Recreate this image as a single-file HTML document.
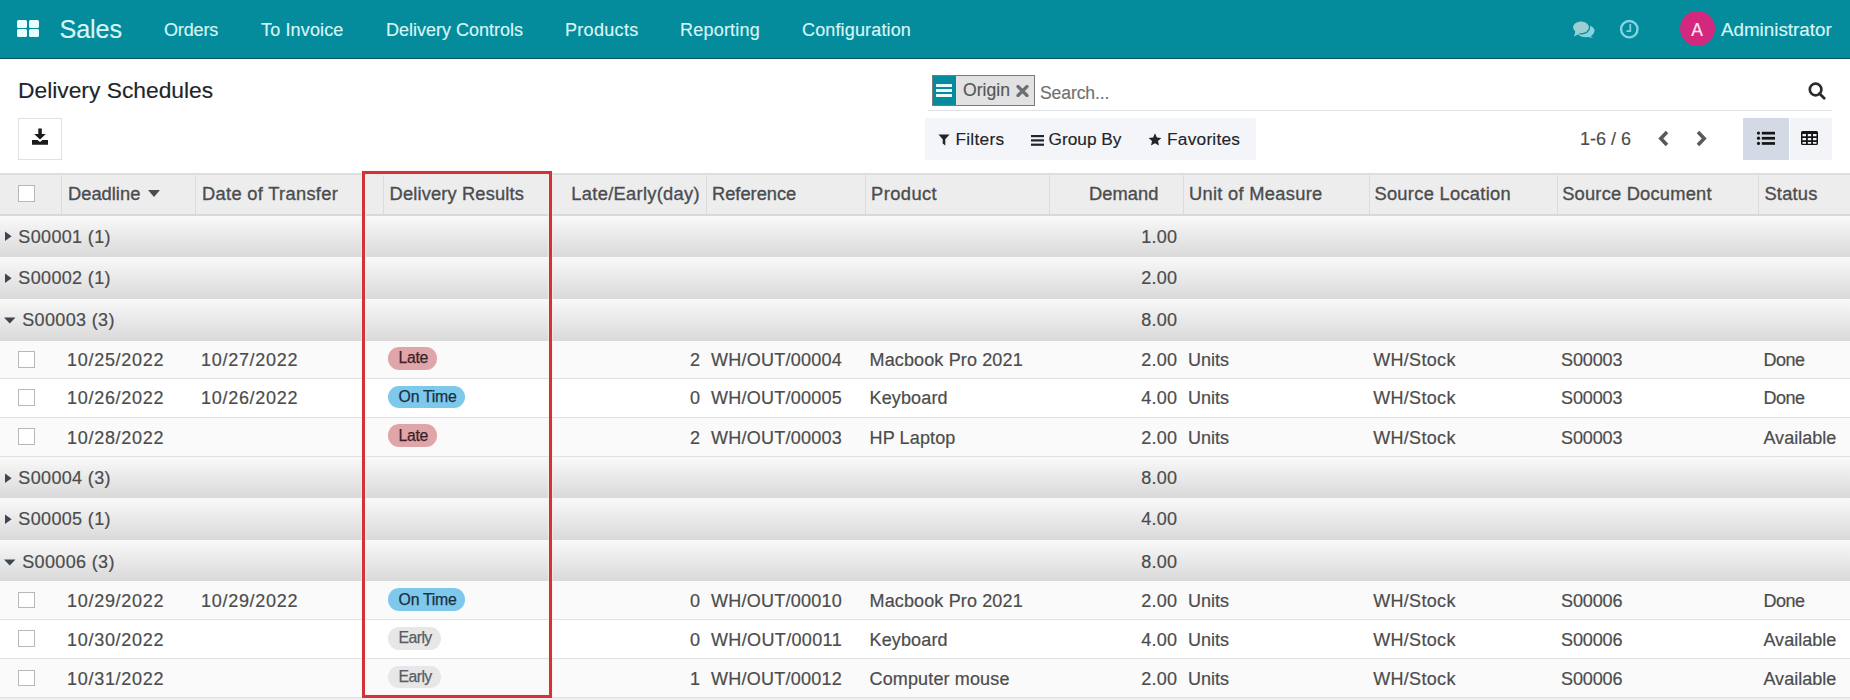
<!DOCTYPE html>
<html><head><meta charset="utf-8">
<style>
*{box-sizing:border-box;margin:0;padding:0}
html,body{width:1850px;height:700px;overflow:hidden;background:#fff}
body{font-family:"Liberation Sans",sans-serif;color:#4c4c4c;position:relative;-webkit-text-stroke:0.15px currentColor}
.a{position:absolute;white-space:nowrap}
#nav{position:absolute;left:0;top:0;width:1850px;height:59px;background:#048c9d;border-bottom:1px solid #0a5560}
.nv{position:absolute;top:18.5px;font-size:18px;line-height:22px;color:#d9f6f6}
.sq{position:absolute;width:10px;height:8px;background:#eaffff;border-radius:1.5px}
.hd{position:absolute;top:0;height:42px;line-height:42px;font-size:18px;font-weight:bold;color:#4c4c4c}
.sep{position:absolute;top:4px;width:1px;height:34px;background:#dcdcdc}
.row{position:absolute;left:0;width:1850px}
.grp{background:linear-gradient(to bottom,#f9f9f9,#d9d9d9)}
.dat{border-bottom:1px solid #dee2e6}
.odd{background:#fafafa}
.even{background:#fff}
.t{position:absolute;font-size:18px;line-height:22px;color:#4c4c4c;white-space:nowrap;-webkit-text-stroke:0.2px #4c4c4c}
.r{text-align:right}
.cb{position:absolute;left:18px;width:17px;height:17px;border:1px solid #b8b8b8;background:#fff}
.bt{position:absolute;white-space:nowrap;-webkit-text-stroke:0.25px currentColor}
.badge{position:absolute;left:388px;height:22px;border-radius:11px;font-size:15.4px;line-height:22px;padding:0 10px;color:#3a3a3a}
.late{background:#e0a5a8;color:#402a2c}
.ontime{background:#7ec8ec;color:#1e3a4c}
.early{background:#e7e7e7;color:#555}
</style></head><body>
<!-- NAVBAR -->
<div id="nav">
  <div class="sq" style="left:17.2px;top:19.6px"></div>
  <div class="sq" style="left:29px;top:19.6px"></div>
  <div class="sq" style="left:17.2px;top:29px"></div>
  <div class="sq" style="left:29px;top:29px"></div>
  <div class="nv" style="left:59.5px;top:14.6px;font-size:25.2px;line-height:28px;letter-spacing:-0.1px">Sales</div>
  <div class="nv" style="left:164px;letter-spacing:-0.135px">Orders</div>
  <div class="nv" style="left:261px;letter-spacing:0.145px">To Invoice</div>
  <div class="nv" style="left:386px;letter-spacing:-0.003px">Delivery Controls</div>
  <div class="nv" style="left:565px;letter-spacing:0.308px">Products</div>
  <div class="nv" style="left:680px;letter-spacing:0.217px">Reporting</div>
  <div class="nv" style="left:802px;letter-spacing:0.148px">Configuration</div>
  <!-- chat icon -->
  <svg class="a" style="left:1565px;top:12px" width="80" height="34" viewBox="0 0 80 34">
    <ellipse cx="20.5" cy="19" rx="9" ry="6.2" fill="#86d5de"/>
    <path d="M24 23 L28 26 L20 24.5 Z" fill="#86d5de"/>
    <ellipse cx="16" cy="15.3" rx="8.6" ry="6.5" fill="#9ccfd2" stroke="#048c9d" stroke-width="1.3"/>
    <path d="M10.5 19 L9 24.5 L15.5 21 Z" fill="#9ccfd2"/>
    <circle cx="64.3" cy="17.2" r="8.2" fill="none" stroke="#82d6e2" stroke-width="2.4"/>
    <path d="M65.3 12 V19.2 H61.5" fill="none" stroke="#82d6e2" stroke-width="1.7"/>
  </svg>
  <div class="a" style="left:1680px;top:11px;width:34.5px;height:34.5px;border-radius:50%;background:#d2297f"></div>
  <div class="nv" style="left:1680px;width:34px;text-align:center;color:#fde6f1;font-size:17.5px;top:19px">A</div>
  <div class="nv" style="left:1721px;font-size:18.8px">Administrator</div>
</div>

<!-- CONTROL PANEL -->
<div class="a" style="left:18px;top:76px;font-size:22.8px;line-height:28px;color:#212529">Delivery Schedules</div>
<div class="a" style="left:18px;top:118px;width:44px;height:42px;border:1px solid #dee2e6;background:#fff"></div>
<svg class="a" style="left:31px;top:128px" width="18" height="18" viewBox="0 0 18 18">
  <path d="M7.3 0.5 H10.8 V6 H14.8 L9 11.5 L3.2 6 H7.3 Z" fill="#1b1b1b"/>
  <path d="M1 12 H6.5 L9 14 L11.5 12 H17 V16.8 H1 Z" fill="#1b1b1b"/>
</svg>

<!-- search -->
<div class="a" style="left:928px;top:110px;width:904px;height:1px;background:#dee2e6"></div>
<div class="a" style="left:931.5px;top:75px;width:103.5px;height:31px;border:1px solid #7a7a7a;background:#e2e2e2"></div>
<div class="a" style="left:932.5px;top:76px;width:23.5px;height:29px;background:#048c9d"></div>
<div class="a" style="left:936px;top:84px;width:16px;height:2.5px;background:#eafcfc"></div>
<div class="a" style="left:936px;top:89px;width:16px;height:2.5px;background:#eafcfc"></div>
<div class="a" style="left:936px;top:94px;width:16px;height:2.5px;background:#eafcfc"></div>
<div class="a" style="left:963px;top:79px;font-size:17.6px;line-height:22px;color:#555">Origin</div>
<svg class="a" style="left:1016px;top:85px" width="13" height="12" viewBox="0 0 13 12">
  <path d="M2 1.5 L11 10.5 M11 1.5 L2 10.5" stroke="#6b6f73" stroke-width="3.2" stroke-linecap="round"/>
</svg>
<div class="a" style="left:1040px;top:81.6px;font-size:17.6px;line-height:22px;color:#707070;letter-spacing:-0.12px">Search...</div>
<svg class="a" style="left:1808px;top:81.5px" width="18" height="18" viewBox="0 0 18 18">
  <circle cx="7.6" cy="7.5" r="5.8" fill="none" stroke="#2b2b2b" stroke-width="2.7"/>
  <path d="M11.5 11.5 L16.2 16.2" stroke="#2b2b2b" stroke-width="2.8" stroke-linecap="round"/>
</svg>

<!-- filter bar -->
<div class="a" style="left:924.5px;top:117.5px;width:331px;height:42.5px;background:#f4f5f8"></div>
<svg class="a" style="left:938px;top:134px" width="12" height="12" viewBox="0 0 12 12">
  <path d="M0.5 0.5 H11.5 L7.3 5.3 V11.5 L4.7 9.5 V5.3 Z" fill="#212529"/>
</svg>
<div class="a" style="left:955.4px;top:128px;font-size:17.3px;line-height:22px;color:#212529;letter-spacing:0.27px">Filters</div>
<svg class="a" style="left:1031px;top:135px" width="13" height="11" viewBox="0 0 13 11">
  <rect x="0" y="0" width="13" height="2.2" fill="#212529"/>
  <rect x="0" y="4.3" width="13" height="2.2" fill="#212529"/>
  <rect x="0" y="8.6" width="13" height="2.2" fill="#212529"/>
</svg>
<div class="a" style="left:1048.5px;top:128px;font-size:17.3px;line-height:22px;color:#212529">Group By</div>
<svg class="a" style="left:1148px;top:132.5px" width="14" height="13" viewBox="0 0 14 13">
  <path d="M7 0.3 L8.9 4.4 L13.4 4.9 L10 8 L11 12.6 L7 10.3 L3 12.6 L4 8 L0.6 4.9 L5.1 4.4 Z" fill="#212529"/>
</svg>
<div class="a" style="left:1167px;top:128px;font-size:17.3px;line-height:22px;color:#212529;letter-spacing:0.24px">Favorites</div>

<!-- pager -->
<div class="a" style="left:1580px;top:128px;font-size:18px;line-height:22px;color:#4c4c4c">1-6 / 6</div>
<svg class="a" style="left:1657px;top:129.5px" width="13" height="17" viewBox="0 0 13 17">
  <path d="M10 2 L3.8 8.5 L10 15" fill="none" stroke="#5a5a5a" stroke-width="3.6"/>
</svg>
<svg class="a" style="left:1695px;top:129.5px" width="13" height="17" viewBox="0 0 13 17">
  <path d="M3 2 L9.2 8.5 L3 15" fill="none" stroke="#5a5a5a" stroke-width="3.6"/>
</svg>
<div class="a" style="left:1743px;top:118px;width:46px;height:42px;background:#d4dae5"></div>
<div class="a" style="left:1790px;top:118px;width:42px;height:42px;background:#f3f4f7"></div>
<svg class="a" style="left:1756px;top:131px" width="20" height="15" viewBox="0 0 20 15">
  <circle cx="2.5" cy="2.1" r="1.6" fill="#151515"/><rect x="5.8" y="0.8" width="13.2" height="2.7" fill="#151515"/>
  <circle cx="2.5" cy="7.2" r="1.6" fill="#151515"/><rect x="5.8" y="5.9" width="13.2" height="2.7" fill="#151515"/>
  <circle cx="2.5" cy="12.4" r="1.6" fill="#151515"/><rect x="5.8" y="11.1" width="13.2" height="2.7" fill="#151515"/>
</svg>
<svg class="a" style="left:1801px;top:131px" width="17" height="14" viewBox="0 0 17 14">
  <path d="M1.5 0 H15.5 Q17 0 17 1.5 V12.5 Q17 14 15.5 14 H1.5 Q0 14 0 12.5 V1.5 Q0 0 1.5 0 Z M1.5 3 V5.2 H5 V3 Z M6.8 3 V5.2 H10.2 V3 Z M12 3 V5.2 H15.5 V3 Z M1.5 7 V9.2 H5 V7 Z M6.8 7 V9.2 H10.2 V7 Z M12 7 V9.2 H15.5 V7 Z M1.5 11 V12.7 H5 V11 Z M6.8 11 V12.7 H10.2 V11 Z M12 11 V12.7 H15.5 V11 Z" fill="#151515" fill-rule="evenodd"/>
</svg>

<!-- TABLE -->
<div class="a" style="left:0;top:173px;width:1850px;height:42.5px;background:#ededed;border-top:2px solid #dddee0;border-bottom:2px solid #d8d9db"></div>
<div class="a" style="left:61.0px;top:175px;width:1px;height:39px;background:#dcdcdc"></div>
<div class="a" style="left:195.0px;top:175px;width:1px;height:39px;background:#dcdcdc"></div>
<div class="a" style="left:383.0px;top:175px;width:1px;height:39px;background:#dcdcdc"></div>
<div class="a" style="left:550.0px;top:175px;width:1px;height:39px;background:#dcdcdc"></div>
<div class="a" style="left:706.0px;top:175px;width:1px;height:39px;background:#dcdcdc"></div>
<div class="a" style="left:864.5px;top:175px;width:1px;height:39px;background:#dcdcdc"></div>
<div class="a" style="left:1048.5px;top:175px;width:1px;height:39px;background:#dcdcdc"></div>
<div class="a" style="left:1182.5px;top:175px;width:1px;height:39px;background:#dcdcdc"></div>
<div class="a" style="left:1368.5px;top:175px;width:1px;height:39px;background:#dcdcdc"></div>
<div class="a" style="left:1556.5px;top:175px;width:1px;height:39px;background:#dcdcdc"></div>
<div class="a" style="left:1757.5px;top:175px;width:1px;height:39px;background:#dcdcdc"></div>
<div class="cb" style="top:185px;height:17px"></div>
<div class="t" style="top:182.56px;font-size:18.30px;line-height:22px;letter-spacing:0.020px;left:68.00px;-webkit-text-stroke:0.35px #4a4f55">Deadline</div>
<div class="t" style="top:182.56px;font-size:18.30px;line-height:22px;letter-spacing:0.318px;left:202.00px;-webkit-text-stroke:0.35px #4a4f55">Date of Transfer</div>
<div class="t" style="top:182.56px;font-size:18.30px;line-height:22px;letter-spacing:0.143px;left:389.60px;-webkit-text-stroke:0.35px #4a4f55">Delivery Results</div>
<div class="t" style="top:182.56px;font-size:18.30px;line-height:22px;letter-spacing:0.307px;right:1150.09px;-webkit-text-stroke:0.35px #4a4f55">Late/Early(day)</div>
<div class="t" style="top:182.56px;font-size:18.30px;line-height:22px;letter-spacing:-0.015px;left:712.00px;-webkit-text-stroke:0.35px #4a4f55">Reference</div>
<div class="t" style="top:182.56px;font-size:18.30px;line-height:22px;letter-spacing:0.447px;left:871.00px;-webkit-text-stroke:0.35px #4a4f55">Product</div>
<div class="t" style="top:182.56px;font-size:18.30px;line-height:22px;letter-spacing:0.021px;right:691.68px;-webkit-text-stroke:0.35px #4a4f55">Demand</div>
<div class="t" style="top:182.56px;font-size:18.30px;line-height:22px;letter-spacing:0.302px;left:1189.00px;-webkit-text-stroke:0.35px #4a4f55">Unit of Measure</div>
<div class="t" style="top:182.56px;font-size:18.30px;line-height:22px;letter-spacing:0.296px;left:1374.40px;-webkit-text-stroke:0.35px #4a4f55">Source Location</div>
<div class="t" style="top:182.56px;font-size:18.30px;line-height:22px;letter-spacing:0.215px;left:1562.20px;-webkit-text-stroke:0.35px #4a4f55">Source Document</div>
<div class="t" style="top:182.56px;font-size:18.30px;line-height:22px;letter-spacing:0.237px;left:1764.40px;-webkit-text-stroke:0.35px #4a4f55">Status</div>
<svg class="a" style="left:148px;top:190px" width="12" height="7" viewBox="0 0 12 7"><path d="M0 0 H12 L6 7 Z" fill="#4c4c4c"/></svg>
<div class="row grp" style="top:215.50px;height:41.50px"></div>
<svg class="a" style="left:4.5px;top:231.3px" width="8" height="11" viewBox="0 0 8 11"><path d="M0 0.5 V10 L6.6 5.25 Z" fill="#3d4650"/></svg>
<div class="t" style="top:225.76px;font-size:18.00px;line-height:22px;letter-spacing:0.354px;left:18.30px">S00001 (1)</div>
<div class="t" style="top:225.76px;font-size:18.00px;line-height:22px;letter-spacing:0.242px;right:672.76px">1.00</div>
<div class="row grp" style="top:257.00px;height:41.50px"></div>
<svg class="a" style="left:4.5px;top:272.8px" width="8" height="11" viewBox="0 0 8 11"><path d="M0 0.5 V10 L6.6 5.25 Z" fill="#3d4650"/></svg>
<div class="t" style="top:267.26px;font-size:18.00px;line-height:22px;letter-spacing:0.354px;left:18.30px">S00002 (1)</div>
<div class="t" style="top:267.26px;font-size:18.00px;line-height:22px;letter-spacing:0.242px;right:672.76px">2.00</div>
<div class="row grp" style="top:298.50px;height:42.30px"></div>
<svg class="a" style="left:4px;top:317.1px" width="12" height="7" viewBox="0 0 12 7"><path d="M0 0.5 H11.5 L5.75 6.5 Z" fill="#3d4650"/></svg>
<div class="t" style="top:309.06px;font-size:18.00px;line-height:22px;letter-spacing:0.354px;left:22.20px">S00003 (3)</div>
<div class="t" style="top:309.06px;font-size:18.00px;line-height:22px;letter-spacing:0.242px;right:672.76px">8.00</div>
<div class="row" style="top:340.80px;height:37.70px;background:#fafafa"></div>
<div class="cb" style="top:351.0px;height:16.5px;width:16.5px"></div>
<div class="t" style="top:349.16px;font-size:18.00px;line-height:22px;letter-spacing:0.711px;left:67.00px">10/25/2022</div>
<div class="t" style="top:349.16px;font-size:18.00px;line-height:22px;letter-spacing:0.711px;left:201.00px">10/27/2022</div>
<div class="badge late" style="top:347.0px;width:49.0px;height:22.6px;border-radius:11.3px"></div>
<div class="bt" style="top:347.33px;font-size:15.80px;line-height:22px;letter-spacing:-0.363px;color:#3a2225;left:398.60px">Late</div>
<div class="t" style="top:349.16px;font-size:18.00px;line-height:22px;letter-spacing:-0.011px;right:1150.01px">2</div>
<div class="t" style="top:349.16px;font-size:18.00px;line-height:22px;letter-spacing:0.247px;left:711.00px">WH/OUT/00004</div>
<div class="t" style="top:349.16px;font-size:18.00px;line-height:22px;letter-spacing:0.137px;left:869.50px">Macbook Pro 2021</div>
<div class="t" style="top:349.16px;font-size:18.00px;line-height:22px;letter-spacing:0.242px;right:672.76px">2.00</div>
<div class="t" style="top:349.16px;font-size:18.00px;line-height:22px;letter-spacing:-0.002px;left:1188.00px">Units</div>
<div class="t" style="top:349.16px;font-size:18.00px;line-height:22px;letter-spacing:0.312px;left:1373.20px">WH/Stock</div>
<div class="t" style="top:349.16px;font-size:18.00px;line-height:22px;letter-spacing:-0.127px;left:1561.00px">S00003</div>
<div class="t" style="top:349.16px;font-size:18.00px;line-height:22px;letter-spacing:-0.433px;left:1763.40px">Done</div>
<div class="row" style="top:378.50px;height:39.00px;background:#fff"></div>
<div class="cb" style="top:389.2px;height:16.5px;width:16.5px"></div>
<div class="t" style="top:387.36px;font-size:18.00px;line-height:22px;letter-spacing:0.711px;left:67.00px">10/26/2022</div>
<div class="t" style="top:387.36px;font-size:18.00px;line-height:22px;letter-spacing:0.711px;left:201.00px">10/26/2022</div>
<div class="badge ontime" style="top:385.9px;width:77.0px;height:22.6px;border-radius:11.3px"></div>
<div class="bt" style="top:386.23px;font-size:15.80px;line-height:22px;letter-spacing:-0.244px;color:#173040;left:398.60px">On Time</div>
<div class="t" style="top:387.36px;font-size:18.00px;line-height:22px;letter-spacing:-0.011px;right:1150.01px">0</div>
<div class="t" style="top:387.36px;font-size:18.00px;line-height:22px;letter-spacing:0.247px;left:711.00px">WH/OUT/00005</div>
<div class="t" style="top:387.36px;font-size:18.00px;line-height:22px;letter-spacing:0.140px;left:869.50px">Keyboard</div>
<div class="t" style="top:387.36px;font-size:18.00px;line-height:22px;letter-spacing:0.242px;right:672.76px">4.00</div>
<div class="t" style="top:387.36px;font-size:18.00px;line-height:22px;letter-spacing:-0.002px;left:1188.00px">Units</div>
<div class="t" style="top:387.36px;font-size:18.00px;line-height:22px;letter-spacing:0.312px;left:1373.20px">WH/Stock</div>
<div class="t" style="top:387.36px;font-size:18.00px;line-height:22px;letter-spacing:-0.127px;left:1561.00px">S00003</div>
<div class="t" style="top:387.36px;font-size:18.00px;line-height:22px;letter-spacing:-0.433px;left:1763.40px">Done</div>
<div class="row" style="top:417.50px;height:39.00px;background:#fafafa"></div>
<div class="cb" style="top:428.4px;height:16.5px;width:16.5px"></div>
<div class="t" style="top:426.56px;font-size:18.00px;line-height:22px;letter-spacing:0.711px;left:67.00px">10/28/2022</div>
<div class="badge late" style="top:424.2px;width:49.0px;height:22.6px;border-radius:11.3px"></div>
<div class="bt" style="top:424.53px;font-size:15.80px;line-height:22px;letter-spacing:-0.363px;color:#3a2225;left:398.60px">Late</div>
<div class="t" style="top:426.56px;font-size:18.00px;line-height:22px;letter-spacing:-0.011px;right:1150.01px">2</div>
<div class="t" style="top:426.56px;font-size:18.00px;line-height:22px;letter-spacing:0.247px;left:711.00px">WH/OUT/00003</div>
<div class="t" style="top:426.56px;font-size:18.00px;line-height:22px;letter-spacing:0.137px;left:869.50px">HP Laptop</div>
<div class="t" style="top:426.56px;font-size:18.00px;line-height:22px;letter-spacing:0.242px;right:672.76px">2.00</div>
<div class="t" style="top:426.56px;font-size:18.00px;line-height:22px;letter-spacing:-0.002px;left:1188.00px">Units</div>
<div class="t" style="top:426.56px;font-size:18.00px;line-height:22px;letter-spacing:0.312px;left:1373.20px">WH/Stock</div>
<div class="t" style="top:426.56px;font-size:18.00px;line-height:22px;letter-spacing:-0.127px;left:1561.00px">S00003</div>
<div class="t" style="top:426.56px;font-size:18.00px;line-height:22px;letter-spacing:0.031px;left:1763.40px">Available</div>
<div class="row grp" style="top:456.50px;height:41.70px"></div>
<svg class="a" style="left:4.5px;top:472.7px" width="8" height="11" viewBox="0 0 8 11"><path d="M0 0.5 V10 L6.6 5.25 Z" fill="#3d4650"/></svg>
<div class="t" style="top:467.16px;font-size:18.00px;line-height:22px;letter-spacing:0.354px;left:18.30px">S00004 (3)</div>
<div class="t" style="top:467.16px;font-size:18.00px;line-height:22px;letter-spacing:0.242px;right:672.76px">8.00</div>
<div class="row grp" style="top:498.20px;height:41.70px"></div>
<svg class="a" style="left:4.5px;top:513.9px" width="8" height="11" viewBox="0 0 8 11"><path d="M0 0.5 V10 L6.6 5.25 Z" fill="#3d4650"/></svg>
<div class="t" style="top:508.36px;font-size:18.00px;line-height:22px;letter-spacing:0.354px;left:18.30px">S00005 (1)</div>
<div class="t" style="top:508.36px;font-size:18.00px;line-height:22px;letter-spacing:0.242px;right:672.76px">4.00</div>
<div class="row grp" style="top:539.90px;height:41.30px"></div>
<svg class="a" style="left:4px;top:558.6px" width="12" height="7" viewBox="0 0 12 7"><path d="M0 0.5 H11.5 L5.75 6.5 Z" fill="#3d4650"/></svg>
<div class="t" style="top:550.56px;font-size:18.00px;line-height:22px;letter-spacing:0.354px;left:22.20px">S00006 (3)</div>
<div class="t" style="top:550.56px;font-size:18.00px;line-height:22px;letter-spacing:0.242px;right:672.76px">8.00</div>
<div class="row" style="top:581.20px;height:38.30px;background:#fafafa"></div>
<div class="cb" style="top:591.5px;height:16.5px;width:16.5px"></div>
<div class="t" style="top:589.66px;font-size:18.00px;line-height:22px;letter-spacing:0.711px;left:67.00px">10/29/2022</div>
<div class="t" style="top:589.66px;font-size:18.00px;line-height:22px;letter-spacing:0.711px;left:201.00px">10/29/2022</div>
<div class="badge ontime" style="top:588.2px;width:77.0px;height:22.6px;border-radius:11.3px"></div>
<div class="bt" style="top:588.53px;font-size:15.80px;line-height:22px;letter-spacing:-0.244px;color:#173040;left:398.60px">On Time</div>
<div class="t" style="top:589.66px;font-size:18.00px;line-height:22px;letter-spacing:-0.011px;right:1150.01px">0</div>
<div class="t" style="top:589.66px;font-size:18.00px;line-height:22px;letter-spacing:0.247px;left:711.00px">WH/OUT/00010</div>
<div class="t" style="top:589.66px;font-size:18.00px;line-height:22px;letter-spacing:0.137px;left:869.50px">Macbook Pro 2021</div>
<div class="t" style="top:589.66px;font-size:18.00px;line-height:22px;letter-spacing:0.242px;right:672.76px">2.00</div>
<div class="t" style="top:589.66px;font-size:18.00px;line-height:22px;letter-spacing:-0.002px;left:1188.00px">Units</div>
<div class="t" style="top:589.66px;font-size:18.00px;line-height:22px;letter-spacing:0.312px;left:1373.20px">WH/Stock</div>
<div class="t" style="top:589.66px;font-size:18.00px;line-height:22px;letter-spacing:-0.127px;left:1561.00px">S00006</div>
<div class="t" style="top:589.66px;font-size:18.00px;line-height:22px;letter-spacing:-0.433px;left:1763.40px">Done</div>
<div class="row" style="top:619.50px;height:39.00px;background:#fff"></div>
<div class="cb" style="top:630.4px;height:16.5px;width:16.5px"></div>
<div class="t" style="top:628.56px;font-size:18.00px;line-height:22px;letter-spacing:0.711px;left:67.00px">10/30/2022</div>
<div class="badge early" style="top:627.1px;width:52.6px;height:22.6px;border-radius:11.3px"></div>
<div class="bt" style="top:627.43px;font-size:15.80px;line-height:22px;letter-spacing:-0.580px;color:#585d63;left:398.60px">Early</div>
<div class="t" style="top:628.56px;font-size:18.00px;line-height:22px;letter-spacing:-0.011px;right:1150.01px">0</div>
<div class="t" style="top:628.56px;font-size:18.00px;line-height:22px;letter-spacing:0.358px;left:711.00px">WH/OUT/00011</div>
<div class="t" style="top:628.56px;font-size:18.00px;line-height:22px;letter-spacing:0.140px;left:869.50px">Keyboard</div>
<div class="t" style="top:628.56px;font-size:18.00px;line-height:22px;letter-spacing:0.242px;right:672.76px">4.00</div>
<div class="t" style="top:628.56px;font-size:18.00px;line-height:22px;letter-spacing:-0.002px;left:1188.00px">Units</div>
<div class="t" style="top:628.56px;font-size:18.00px;line-height:22px;letter-spacing:0.312px;left:1373.20px">WH/Stock</div>
<div class="t" style="top:628.56px;font-size:18.00px;line-height:22px;letter-spacing:-0.127px;left:1561.00px">S00006</div>
<div class="t" style="top:628.56px;font-size:18.00px;line-height:22px;letter-spacing:0.031px;left:1763.40px">Available</div>
<div class="row" style="top:658.50px;height:38.80px;background:#fafafa"></div>
<div class="cb" style="top:669.5px;height:16.5px;width:16.5px"></div>
<div class="t" style="top:667.66px;font-size:18.00px;line-height:22px;letter-spacing:0.711px;left:67.00px">10/31/2022</div>
<div class="badge early" style="top:665.6px;width:52.6px;height:22.6px;border-radius:11.3px"></div>
<div class="bt" style="top:665.93px;font-size:15.80px;line-height:22px;letter-spacing:-0.580px;color:#585d63;left:398.60px">Early</div>
<div class="t" style="top:667.66px;font-size:18.00px;line-height:22px;letter-spacing:-0.011px;right:1150.01px">1</div>
<div class="t" style="top:667.66px;font-size:18.00px;line-height:22px;letter-spacing:0.247px;left:711.00px">WH/OUT/00012</div>
<div class="t" style="top:667.66px;font-size:18.00px;line-height:22px;letter-spacing:0.144px;left:869.50px">Computer mouse</div>
<div class="t" style="top:667.66px;font-size:18.00px;line-height:22px;letter-spacing:0.242px;right:672.76px">2.00</div>
<div class="t" style="top:667.66px;font-size:18.00px;line-height:22px;letter-spacing:-0.002px;left:1188.00px">Units</div>
<div class="t" style="top:667.66px;font-size:18.00px;line-height:22px;letter-spacing:0.312px;left:1373.20px">WH/Stock</div>
<div class="t" style="top:667.66px;font-size:18.00px;line-height:22px;letter-spacing:-0.127px;left:1561.00px">S00006</div>
<div class="t" style="top:667.66px;font-size:18.00px;line-height:22px;letter-spacing:0.031px;left:1763.40px">Available</div>
<div class="row" style="top:377.75px;height:1.5px;background:#dfe0e2"></div>
<div class="row" style="top:416.75px;height:1.5px;background:#dfe0e2"></div>
<div class="row" style="top:455.75px;height:1.5px;background:#dfe0e2"></div>
<div class="row" style="top:618.75px;height:1.5px;background:#dfe0e2"></div>
<div class="row" style="top:657.75px;height:1.5px;background:#dfe0e2"></div>
<div class="row" style="top:696.55px;height:1.5px;background:#dfe0e2"></div>
<div class="a" style="left:0;top:698px;width:1850px;height:2px;background:#efefef"></div>
<div class="a" style="left:362px;top:171px;width:189.7px;height:527px;border:3px solid #cf3438;box-shadow:0 0 0 1px rgba(255,235,235,0.45),inset 0 0 0 1.5px rgba(255,235,235,0.45)"></div>
</body></html>
